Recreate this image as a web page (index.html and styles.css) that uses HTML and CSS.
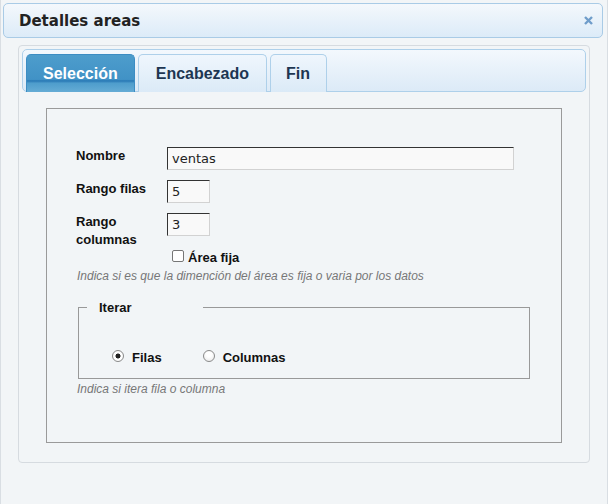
FILE: index.html
```html
<!DOCTYPE html>
<html lang="es">
<head>
<meta charset="utf-8">
<title>Detalles areas</title>
<link rel="stylesheet" href="styles.css">
</head>
<body>
<div class="dialog">
  <div class="titlebar">
    <span class="title">Detalles areas</span>
    <span class="close" aria-label="cerrar">
      <svg width="9" height="9" viewBox="0 0 9 9"><path d="M1 1 L8 8 M8 1 L1 8" stroke="#6f9dca" stroke-width="2.4" stroke-linecap="butt"/></svg>
    </span>
  </div>
  <div class="tabs">
    <ul class="tabnav">
      <li class="tab active">Selección</li>
      <li class="tab">Encabezado</li>
      <li class="tab">Fin</li>
    </ul>
    <div class="tabpanel">
      <fieldset class="box">
        <div class="form">
          <label class="lbl">Nombre</label>
          <input class="txt wide" type="text" value="ventas">
          <label class="lbl">Rango filas</label>
          <input class="txt short" type="text" value="5">
          <label class="lbl">Rango<br>columnas</label>
          <input class="txt short" type="text" value="3">
          <span></span>
          <label class="check"><input type="checkbox"> Área fija</label>
        </div>
        <p class="hint first">Indica si es que la dimención del área es fija o varia por los datos</p>
        <fieldset class="iter">
          <legend>Iterar</legend>
          <div class="radios">
            <label class="radio"><input type="radio" name="it" checked> Filas</label>
            <label class="radio"><input type="radio" name="it"> Columnas</label>
          </div>
        </fieldset>
        <p class="hint">Indica si itera fila o columna</p>
      </fieldset>
    </div>
  </div>
</div>
</body>
</html>
```

FILE: styles.css
```css
html, body {
  margin: 0;
  padding: 0;
  background: #f2f5f7;
}

.dialog {
  box-sizing: border-box;
  width: 608px;
  min-height: 504px;
  border-left: 1px solid #d9dee3;
  border-right: 1px solid #d9dee3;
  padding: 3px 4px 0 2px;
  font-family: "Liberation Sans", Arial, sans-serif;
}

.titlebar {
  box-sizing: border-box;
  height: 35px;
  border: 1px solid #a9cbe6;
  border-radius: 5px;
  background: linear-gradient(#f4f8fc, #dcebf8);
  display: flex;
  align-items: center;
  justify-content: space-between;
  padding: 0 9px 0 15px;
}

.title {
  font-family: "DejaVu Sans", sans-serif;
  font-weight: bold;
  font-size: 15px;
  color: #222;
}

.close {
  display: flex;
  width: 9px;
  height: 9px;
}

.tabs {
  box-sizing: border-box;
  margin: 7px 13px 0 15px;
  height: 418px;
  border: 1px solid #d6dbe0;
  border-radius: 4px;
  padding: 3px;
  background: #f2f5f7;
}

.tabnav {
  box-sizing: border-box;
  list-style: none;
  margin: 0;
  height: 43px;
  padding: 4px 3px 0;
  border: 1px solid #aed0ea;
  border-radius: 5px;
  background: linear-gradient(#f3f8fd, #dceaf7);
  display: flex;
  gap: 3px;
  align-items: stretch;
}

.tab {
  box-sizing: border-box;
  height: 38px;
  margin-bottom: -1px;
  padding: 1px 17px 0;
  border: 1px solid #aed0ea;
  border-bottom: none;
  border-radius: 5px 5px 0 0;
  background: linear-gradient(#eff6fd, #dbeaf7);
  font-weight: bold;
  font-size: 16px;
  color: #1d3652;
  display: flex;
  align-items: center;
}

.tab:last-child {
  padding: 1px 16px 0 15px;
}

.tab.active {
  padding: 1px 16px 0;
  border-color: #3c8dc3;
  background: linear-gradient(#4d9dcc 0%, #4192c6 66%, #2878b5 70%, #4e9dcc 76%, #65acd5 100%);
  color: #fff;
}

.tabpanel {
  padding: 16px 24px 0 24px;
}

.box {
  box-sizing: border-box;
  margin: 0;
  height: 335px;
  border: 1px solid #9a9a9a;
  padding: 38px 0 0 29px;
  background: #f2f5f7;
}

.form {
  display: grid;
  grid-template-columns: 91px 347px;
  row-gap: 10px;
  align-items: start;
}

.lbl {
  font-weight: bold;
  font-size: 13px;
  line-height: 18px;
  color: #111;
}

.txt {
  box-sizing: border-box;
  height: 23px;
  margin: 0;
  padding: 0 4px;
  border-style: solid;
  border-width: 1px;
  border-color: #333 #d2d2d2 #d2d2d2 #333;
  background: #f9f9f9;
  font-family: "DejaVu Sans", sans-serif;
  font-size: 13px;
  color: #222;
  outline: none;
}

.wide { width: 347px; }
.short { width: 43px; }

.check {
  margin-top: -9px;
  font-weight: bold;
  font-size: 13px;
  color: #111;
  display: flex;
  align-items: center;
  line-height: 16px;
}

.check input {
  appearance: none;
  box-sizing: border-box;
  margin: 0 4px 0 5px;
  width: 12px;
  height: 12px;
  border: 1px solid #767676;
  border-radius: 2px;
  background: #fff;
  position: relative;
  top: -2px;
}

.hint {
  margin: 3px 0 0 1px;
  font-style: italic;
  font-size: 12px;
  line-height: 14px;
  color: #777;
}

.hint.first {
  margin-top: 3px;
}

.iter {
  box-sizing: border-box;
  margin: 17px 0 0 2px;
  width: 452px;
  height: 79px;
  border: 1px solid #999;
  padding: 0 8px;
}

.iter legend {
  padding: 0 71px 0 12px;
  margin-left: 0;
  font-weight: bold;
  font-size: 13px;
  color: #111;
}

.radios {
  display: flex;
  gap: 41px;
  padding: 35px 0 0 25px;
}

.radio {
  font-weight: bold;
  font-size: 13px;
  color: #111;
  display: flex;
  align-items: center;
}

.radio input {
  appearance: none;
  box-sizing: border-box;
  margin: 0 8px 0 0;
  width: 12px;
  height: 12px;
  border: 1px solid #8a8a8a;
  border-radius: 50%;
  background: radial-gradient(circle at 50% 35%, #ffffff 30%, #e6e6e6 100%);
  position: relative;
  top: -2px;
}

.radio input:checked {
  background: radial-gradient(circle, #222 0 2.2px, #fff 2.8px 60%, #e4e4e4 100%);
}
```
